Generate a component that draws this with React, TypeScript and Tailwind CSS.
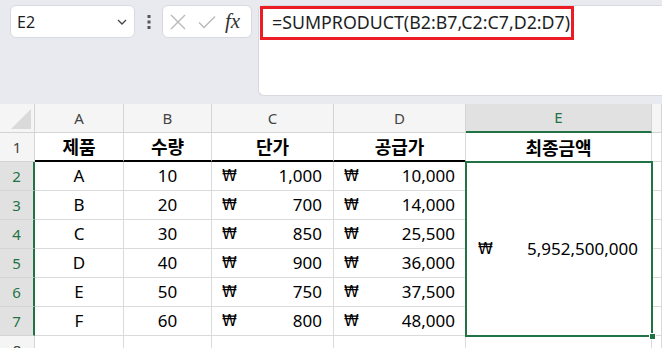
import React from "react";

const FONT = { fontFamily: '"Noto Sans", "Noto Sans CJK KR", sans-serif' };
const KFONT = { fontFamily: '"Noto Sans CJK KR", "Noto Sans", sans-serif' };

const rows = [
  { name: "A", qty: "10", price: "1,000", supply: "10,000" },
  { name: "B", qty: "20", price: "700", supply: "14,000" },
  { name: "C", qty: "30", price: "850", supply: "25,500" },
  { name: "D", qty: "40", price: "900", supply: "36,000" },
  { name: "E", qty: "50", price: "750", supply: "37,500" },
  { name: "F", qty: "60", price: "800", supply: "48,000" },
];

function Toolbar() {
  return (
    <div className="h-[104px] bg-[#e8eaef] flex items-start pt-[5px] pl-[10px] gap-0">
      {/* name box */}
      <div className="w-[125px] h-[33px] bg-white rounded-md border border-[#d8dadf] flex items-center justify-between pl-[6px] pr-[7px]">
        <span className="text-[16px] text-[#1f1f1f]" style={FONT}>E2</span>
        <svg width="10" height="6" viewBox="0 0 10 6">
          <path d="M1 1 L5 5 L9 1" fill="none" stroke="#444" strokeWidth="1.3" />
        </svg>
      </div>
      {/* dots */}
      <div className="w-[27px] h-[33px] flex items-center justify-center">
        <svg width="4" height="14" viewBox="0 0 4 14">
          <rect x="0.5" y="0" width="3" height="3" fill="#555" />
          <rect x="0.5" y="5.5" width="3" height="3" fill="#555" />
          <rect x="0.5" y="11" width="3" height="3" fill="#555" />
        </svg>
      </div>
      {/* function box */}
      <div className="w-[90px] h-[33px] bg-white rounded-md border border-[#d8dadf] flex items-center pl-[7px] gap-[12px]">
        <svg width="16" height="16" viewBox="0 0 16 16">
          <path d="M1 1 L15 15 M15 1 L1 15" stroke="#b9b9b9" strokeWidth="1.4" />
        </svg>
        <svg width="18" height="14" viewBox="0 0 18 14">
          <path d="M1 7.5 L6 12.5 L17 1.5" fill="none" stroke="#b9b9b9" strokeWidth="1.4" />
        </svg>
        <span className="text-[21px] italic text-[#333] leading-none -ml-[3px]" style={{ fontFamily: '"Liberation Serif", "DejaVu Serif", serif' }}>fx</span>
      </div>
      {/* formula box */}
      <div className="ml-[6px] flex-1 h-[91px] bg-white rounded-l-md border border-r-0 border-[#d8dadf] relative">
        <div className="absolute left-[1px] top-0 w-[314px] h-[34px] border-[3px] border-[#ec1c24]" />
        <div className="pl-[13px] pt-[3px] text-[17.8px] text-[#1f1f1f] leading-[26px]" style={FONT}>
          =SUMPRODUCT(B2:B7,C2:C7,D2:D7)
        </div>
      </div>
    </div>
  );
}

function ColHeader({ label, active }: { label: string; active?: boolean }) {
  return (
    <div
      className={`h-[29px] flex items-center justify-center text-[15px] border-r border-[#d4d4d4] ${
        active ? "bg-[#e1e1e1] text-[#217346] border-b-2 border-b-[#217346]" : "bg-[#f5f5f5] text-[#444] border-b border-b-[#d4d4d4]"
      }`}
      style={FONT}
    >
      {label}
    </div>
  );
}

function RowHeader({ n, active }: { n: number; active?: boolean }) {
  return (
    <div
      className={`h-[29px] flex items-center justify-center text-[15px] border-b border-[#d4d4d4] ${
        active ? "bg-[#e1e1e1] text-[#217346] border-r-2 border-r-[#217346]" : "bg-[#f5f5f5] text-[#444] border-r border-r-[#d4d4d4]"
      }`}
      style={FONT}
    >
      {n}
    </div>
  );
}

function Cell({ children, className = "" }: { children?: React.ReactNode; className?: string }) {
  return (
    <div className={`h-[29px] border-r border-b border-[#dadada] bg-white text-[17px] text-black flex items-center ${className}`} style={FONT}>
      {children}
    </div>
  );
}

function Won() {
  return (
    <span className="text-[15px]" style={{ fontFamily: '"DejaVu Sans", "Noto Sans", sans-serif' }}>₩</span>
  );
}

function Money({ v, padR }: { v: string; padR: string }) {
  return (
    <div className={`w-full flex items-center justify-between pl-[10px] ${padR}`}>
      <Won />
      <span>{v}</span>
    </div>
  );
}

export default function App() {
  return (
    <div className="w-[662px] h-[348px] overflow-hidden bg-white">
      <Toolbar />
      <div className="grid grid-cols-[35px_89px_88px_122px_132px_186px_1fr] grid-rows-[repeat(8,29px)]">
        {/* corner */}
        <div className="h-[29px] bg-[#f5f5f5] border-r border-b border-[#d4d4d4] flex items-end justify-end p-[3px]">
          <svg width="20" height="20" viewBox="0 0 20 20">
            <path d="M20 0 L20 20 L0 20 Z" fill="#dadada" />
          </svg>
        </div>
        <ColHeader label="A" />
        <ColHeader label="B" />
        <ColHeader label="C" />
        <ColHeader label="D" />
        <ColHeader label="E" active />
        <ColHeader label="" />

        {/* row 1 */}
        <RowHeader n={1} />
        {["제품", "수량", "단가", "공급가"].map((h) => (
          <div key={h} className="h-[29px] border-r border-r-[#dadada] border-b-2 border-b-black bg-white flex items-center justify-center text-[18px] font-bold" style={KFONT}>
            {h}
          </div>
        ))}
        <div className="h-[29px] border-r border-[#dadada] bg-white flex items-center justify-center text-[18px] font-bold" style={KFONT}>
          최종금액
        </div>
        <Cell />

        {/* rows 2-7 */}
        {rows.map((r, i) => (
          <React.Fragment key={r.name}>
            <RowHeader n={i + 2} active />
            <Cell className="justify-center">{r.name}</Cell>
            <Cell className="justify-center">{r.qty}</Cell>
            <Cell>
              <Money v={r.price} padR="pr-[11px]" />
            </Cell>
            <Cell>
              <Money v={r.supply} padR="pr-[10px]" />
            </Cell>
            {i === 0 && (
              <div className="row-span-6 bg-white relative flex items-center" style={FONT}>
                <div className="absolute -left-[1px] -top-[1px] -right-[1px] -bottom-[1px] border-2 border-[#217346]" />
                <div className="absolute -right-[4px] -bottom-[4px] w-[7px] h-[7px] bg-[#217346] border border-white" />
                <div className="w-full flex items-center justify-between pl-[12px] pr-[14px] text-[17px]">
                  <Won />
                  <span>5,952,500,000</span>
                </div>
              </div>
            )}
            <Cell />
          </React.Fragment>
        ))}

        {/* row 8 */}
        <RowHeader n={8} />
        <Cell />
        <Cell />
        <Cell />
        <Cell />
        <Cell />
        <Cell />
      </div>
    </div>
  );
}
